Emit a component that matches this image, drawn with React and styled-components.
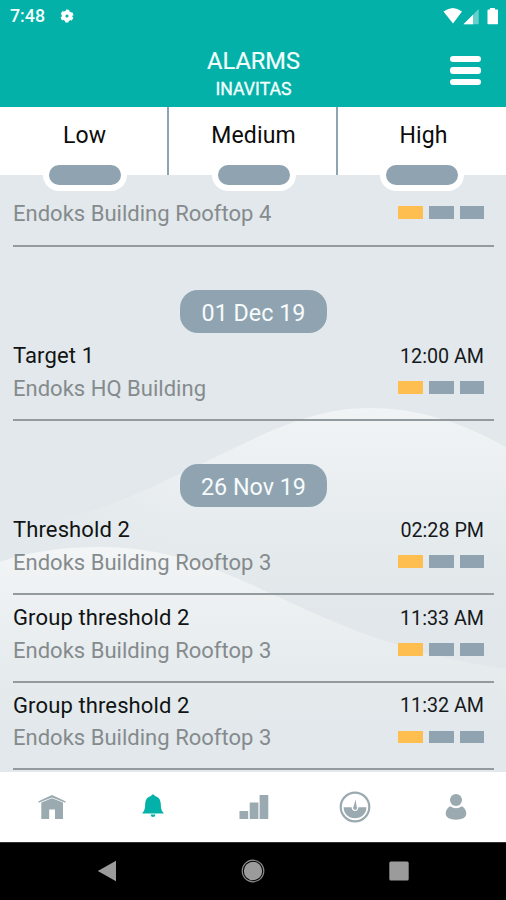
import React from "react";
import styled, { createGlobalStyle } from "styled-components";

const SLATE = "#8fa4b0";
const TEAL = "#03b1a9";
const AMBER = "#ffbf50";

const GlobalStyle = createGlobalStyle`
  * { box-sizing: border-box; }
  body { margin: 0; background: #000; font-family: Roboto, "Liberation Sans", sans-serif; }
`;

const Screen = styled.div`
  width: 506px;
  height: 900px;
  display: flex;
  flex-direction: column;
  overflow: hidden;
`;

const TopArea = styled.header`
  height: 107px;
  flex: none;
  background: ${TEAL};
  color: #f3fffd;
`;

const StatusBar = styled.div`
  height: 32px;
  display: flex;
  align-items: center;
  padding: 0 7px 0 10px;
  svg { display: block; flex: none; }
`;

const Clock = styled.span`
  font-size: 17.8px;
  font-weight: 500;
  line-height: 32px;
  width: 50px;
`;

const StatusIcons = styled.div`
  display: flex;
  margin-left: auto;
`;

const TitleBar = styled.div`
  height: 75px;
  display: grid;
  grid-template-columns: 1fr auto 1fr;
`;

const Titles = styled.div`
  grid-column: 2;
  text-align: center;
  padding: 15px 0 0 1px;
`;

const Title = styled.h1`
  margin: 0;
  font-size: 23.6px;
  font-weight: 400;
  line-height: 28px;
  -webkit-text-stroke: 0.2px;
`;

const Subtitle = styled.div`
  font-size: 17.7px;
  line-height: 28px;
  -webkit-text-stroke: 0.35px;
`;

const MenuButton = styled.button`
  border: 0;
  padding: 0;
  background: none;
  justify-self: end;
  width: 31px;
  margin: 24px 25px 0 0;
  display: flex;
  flex-direction: column;
  gap: 5px;
`;

const MenuBar = styled.span`
  height: 6.3px;
  border-radius: 3px;
  background: #fff;
  width: 100%;
`;

const Levels = styled.div`
  height: 68px;
  flex: none;
  display: grid;
  grid-template-columns: 169px 169px 168px;
  background: #fff;
  z-index: 1;
`;

const Level = styled.div`
  height: 68px;
  display: flex;
  flex-direction: column;
  align-items: center;
  border-right: ${(p) => (p.$last ? "0" : `2px solid ${SLATE}`)};
  padding: ${(p) => (p.$last ? "0" : "0 0 0 2px")};
`;

const LevelName = styled.div`
  font-size: 23px;
  letter-spacing: 0.15px;
  line-height: 28px;
  padding: 15px 0 9px ${(p) => (p.$last ? 3 : 0)}px;
  color: #0c0c0c;
`;

const LevelPill = styled.div`
  width: 84px;
  height: 32px;
  flex: none;
  border: 6px solid #fff;
  border-radius: 16px;
  background: ${SLATE};
`;

const List = styled.main`
  position: relative;
  height: 597px;
  flex: none;
  overflow: hidden;
  background: #e2e8eb;
  display: flex;
  flex-direction: column;
`;

const Waves = styled.svg`
  position: absolute;
  inset: 0;
`;

const Content = styled.div`
  position: relative;
`;

const Row = styled.article`
  height: ${(p) => p.$height}px;
  margin: 0 12px 0 13px;
  padding: ${(p) => (p.$cut ? 22 : 6)}px 10px 0 0;
  border-bottom: 2px solid #949b9f;
  display: grid;
  grid-template-columns: 1fr auto;
  grid-auto-rows: ${(p) => (p.$height === 87 ? 32.5 : 33)}px;
  align-items: center;
`;

const AlarmName = styled.div`
  font-size: 22px;
  letter-spacing: 0.12px;
  color: #101414;
  white-space: nowrap;
`;

const Site = styled(AlarmName)`
  letter-spacing: 0.02px;
  color: #858b8d;
`;

const Time = styled.time`
  font-size: 19.7px;
  padding-top: 1px;
  color: #16191b;
  text-align: right;
`;

const Severity = styled.div`
  display: flex;
  gap: 6px;
  justify-content: flex-end;
  margin-top: -2px;
`;

const Block = styled.span`
  width: ${(p) => (p.$on ? 25 : 24.5)}px;
  height: 12.5px;
  background: ${(p) => (p.$on ? AMBER : SLATE)};
`;

const DateBand = styled.div`
  height: 86px;
  padding-left: 1px;
  display: flex;
  justify-content: center;
  align-items: flex-end;
`;

const DatePill = styled.div`
  width: 147px;
  height: 43px;
  border-radius: 18px;
  background: ${SLATE};
  color: #f7fbfd;
  font-size: 23.3px;
  line-height: 46px;
  text-align: center;
`;

const Tabs = styled.nav`
  height: 70px;
  flex: none;
  background: #fff;
  padding-left: 2px;
  display: grid;
  grid-template-columns: repeat(5, 1fr);
  justify-items: center;
  align-items: center;
`;

const Tab = styled.div`
  display: flex;
  color: ${(p) => (p.$active ? TEAL : "#9baab1")};
`;

const SystemBar = styled.footer`
  height: 58px;
  flex: none;
  background: #000;
  border-top: 1px solid #333;
  padding-bottom: 1px;
  display: grid;
  grid-template-columns: repeat(3, 146px);
  justify-content: center;
  justify-items: center;
  align-items: center;
`;

const Gear = () => (
  <svg width="14" height="14" viewBox="2 2 20 20">
    <circle cx="12" cy="12" r="5" fill="none" stroke="#fff" strokeWidth="5.5" />
    <circle cx="12" cy="12" r="7.800" fill="none" stroke="#fff" strokeWidth="3" strokeDasharray="4.600 3.568" strokeDashoffset="-1.700" />
  </svg>
);

const Signals = () => (
  <svg width="56" height="18" viewBox="443 6 56 18" fill="#fff">
    <path d="M443.500 10.500Q453 3.500 462 10.500L453 22.500Z" />
    <path d="M463.500 23.200L478.700 8V23.200Z" opacity=".4" />
    <path d="M463.500 23.200L473 13.700V23.200Z" />
    <path d="M490 7h5v1.600h2.200q.8 0 .8.800V22.400q0 .8-.8.800h-8.900q-.8 0-.8-.8V9.400q0-.8.8-.8H490Z" />
  </svg>
);

const HomeIcon = () => (
  <svg width="28" height="26" viewBox="0 0 28 26" fill="currentColor">
    <path d="M14 1L27.500 7.200V8.800L14 3.400.5 8.800V7.200Z" />
    <path d="M14 4.200L25 8.600V25H17V15.500H11.200V25H3.300V8.600Z" />
  </svg>
);

const BellIcon = () => (
  <svg width="22" height="26" viewBox="0 0 22 26" fill="currentColor">
    <path d="M11 .6q1.600 0 1.800 1.300c4.600 1 5.800 4.200 6 8.300.2 4.600.6 6.200 2.700 8.600v.8H.5v-.8c2.100-2.400 2.500-4 2.700-8.600.2-4.100 1.400-7.300 6-8.300Q9.400.6 11 .6Z" />
    <path d="M8.600 20.500h4.800q-.2 2.600-2.400 2.600t-2.400-2.600Z" />
  </svg>
);

const BarsIcon = () => (
  <svg width="30" height="26" viewBox="0 0 30 26" fill="currentColor">
    <path d="M.5 17h8.700v8H.5zM10.700 8.500h8.700V25h-8.700zM20.600 1H29.300V25h-8.700z" />
  </svg>
);

const GaugeIcon = () => (
  <svg width="32" height="32" viewBox="0 0 32 32" fill="currentColor">
    <circle cx="16" cy="16" r="14.300" fill="none" stroke="currentColor" strokeWidth="2.200" />
    <path d="M4.600 16.200H12.600Q13 20 16 20t3.400-3.800H27.400C27.400 22.600 22.400 27.200 16 27.200S4.600 22.600 4.600 16.200Z" />
    <path d="M16.600 8.500L17.600 15.500A2 2 0 1 1 14.600 15.500Z" />
  </svg>
);

const UserIcon = () => (
  <svg width="22" height="26" viewBox="0 1 22 26" fill="currentColor">
    <circle cx="11" cy="7" r="6" />
    <path d="M5 13.200Q11 17.400 17 13.200Q21.300 16 21.300 20.600C21.300 24.800 17 26.700 11 26.700S.7 24.800.7 20.600Q.7 16 5 13.200Z" />
  </svg>
);

const tabs = [
  { id: "home", Icon: HomeIcon },
  { id: "alarms", Icon: BellIcon, active: true },
  { id: "stats", Icon: BarsIcon },
  { id: "gauge", Icon: GaugeIcon },
  { id: "profile", Icon: UserIcon },
];

const groups = [
  { date: "01 Dec 19", alarms: [{ name: "Target 1", site: "Endoks HQ Building", time: "12:00 AM", height: 88 }] },
  {
    date: "26 Nov 19",
    alarms: [
      { name: "Threshold 2", site: "Endoks Building Rooftop 3", time: "02:28 PM", height: 88 },
      { name: "Group threshold 2", site: "Endoks Building Rooftop 3", time: "11:33 AM", height: 88 },
      { name: "Group threshold 2", site: "Endoks Building Rooftop 3", time: "11:32 AM", height: 87 },
    ],
  },
];

const SeverityBlocks = () => (
  <Severity>
    <Block $on />
    <Block />
    <Block />
  </Severity>
);

const Alarm = ({ name, site, time, height }) => (
  <Row $height={height} $cut={!name}>
    {name && <AlarmName>{name}</AlarmName>}
    {time && <Time>{time}</Time>}
    <Site>{site}</Site>
    <SeverityBlocks />
  </Row>
);

const Backdrop = () => (
  <Waves width="506" height="597" viewBox="0 175 506 597">
    <defs>
      <linearGradient id="back" gradientUnits="userSpaceOnUse" x1="0" y1="408" x2="0" y2="610">
        <stop offset="0" stopColor="#f1f4f5" />
        <stop offset=".6" stopColor="#e6ebee" />
        <stop offset="1" stopColor="#e1e7ea" />
      </linearGradient>
      <linearGradient id="front" gradientUnits="userSpaceOnUse" x1="0" y1="546" x2="0" y2="730">
        <stop offset="0" stopColor="#f3f5f6" />
        <stop offset=".6" stopColor="#e7ecee" />
        <stop offset="1" stopColor="#e2e8eb" />
      </linearGradient>
      <linearGradient id="left" x1="0" y1="0" x2="1" y2="0">
        <stop offset="0" stopColor="#e2e8eb" />
        <stop offset=".35" stopColor="#e2e8eb" stopOpacity="0" />
      </linearGradient>
    </defs>
    <path d="M0 528C70 522 110 508 175 476C245 445 300 408 370 408C420 408 465 424 506 447V772H0Z" fill="url(#back)" />
    <path d="M0 528C70 522 110 508 175 476C245 445 300 408 370 408C420 408 465 424 506 447V560H0Z" fill="url(#left)" />
    <path d="M0 562C30 551 65 547 100 547C170 547 220 570 270 593C340 626 400 653 506 669V772H0Z" fill="url(#front)" />
  </Waves>
);

export default function App() {
  return (
    <Screen>
      <GlobalStyle />
      <TopArea>
        <StatusBar>
          <Clock>7:48</Clock>
          <Gear />
          <StatusIcons>
            <Signals />
          </StatusIcons>
        </StatusBar>
        <TitleBar>
          <Titles>
            <Title>ALARMS</Title>
            <Subtitle>INAVITAS</Subtitle>
          </Titles>
          <MenuButton aria-label="Menu">
            <MenuBar />
            <MenuBar />
            <MenuBar />
          </MenuButton>
        </TitleBar>
      </TopArea>
      <Levels>
        {["Low", "Medium", "High"].map((name) => (
          <Level key={name} $last={name === "High"}>
            <LevelName $last={name === "High"}>{name}</LevelName>
            <LevelPill />
          </Level>
        ))}
      </Levels>
      <List>
        <Backdrop />
        <Content>
          <Alarm site="Endoks Building Rooftop 4" height={72} />
          {groups.map((group) => (
            <section key={group.date}>
              <DateBand>
                <DatePill>{group.date}</DatePill>
              </DateBand>
              {group.alarms.map((alarm) => (
                <Alarm key={alarm.time} {...alarm} />
              ))}
            </section>
          ))}
        </Content>
      </List>
      <Tabs>
        {tabs.map(({ id, Icon, active }) => (
          <Tab key={id} $active={active}>
            <Icon />
          </Tab>
        ))}
      </Tabs>
      <SystemBar>
        <svg width="20" height="22" viewBox="0 0 20 22">
          <path d="M.8 11L19 .8V21.200Z" fill="#9b9b9b" />
        </svg>
        <svg width="24" height="24" viewBox="0 0 24 24">
          <circle cx="12" cy="12" r="10.800" fill="none" stroke="#8b8b8b" strokeWidth="1.200" />
          <circle cx="12" cy="12" r="9.200" fill="#9b9b9b" />
        </svg>
        <svg width="20" height="20" viewBox="0 0 20 20">
          <rect x=".3" y=".5" width="19.400" height="19" rx="1.500" fill="#9b9b9b" />
        </svg>
      </SystemBar>
    </Screen>
  );
}
